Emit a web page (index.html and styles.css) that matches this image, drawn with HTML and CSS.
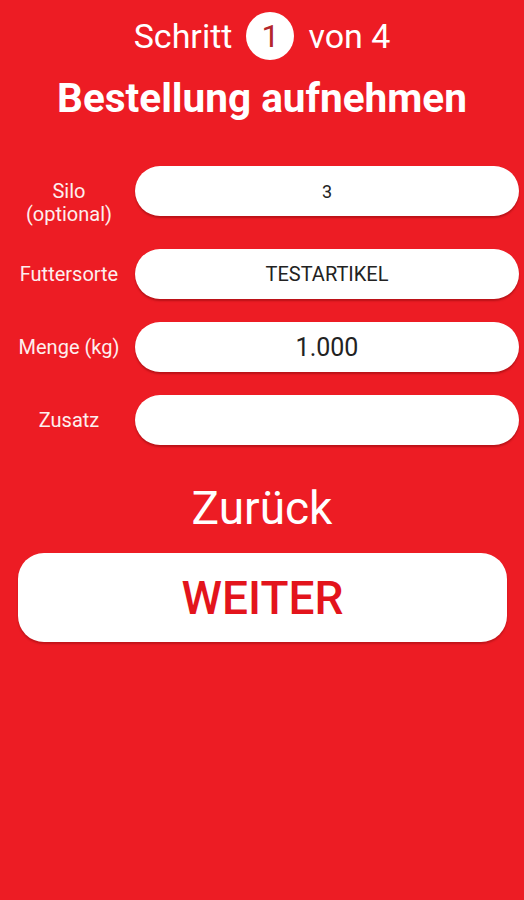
FILE: index.html
```html
<!DOCTYPE html>
<html lang="de">
<head>
    <meta charset="UTF-8">
    <meta name="viewport" content="width=device-width, initial-scale=1.0">
    <title>Bestellung aufnehmen</title>
    <link rel="stylesheet" href="styles.css">
</head>
<body>
    <div class="screen">
        <div class="step">
            <span>Schritt</span>
            <span class="step-num">1</span>
            <span>von 4</span>
        </div>
        <h1>Bestellung aufnehmen</h1>

        <div class="form">
            <div class="row">
                <label class="label label-two">Silo<br>(optional)</label>
                <div class="field field-sm">3</div>
            </div>
            <div class="row">
                <label class="label">Futtersorte</label>
                <div class="field field-md">TESTARTIKEL</div>
            </div>
            <div class="row">
                <label class="label">Menge (kg)</label>
                <div class="field field-lg">1.000</div>
            </div>
            <div class="row">
                <label class="label">Zusatz</label>
                <div class="field"></div>
            </div>
        </div>

        <div class="back">Zurück</div>
        <button class="next-btn">WEITER</button>
    </div>
</body>
</html>
```

FILE: styles.css
```css
body {
    margin: 0;
    background: #ed1c24;
    font-family: Roboto, "Liberation Sans", Arial, sans-serif;
    color: #fff;
}
.screen {
    min-height: 900px;
    display: flex;
    flex-direction: column;
}
.step {
    display: flex;
    justify-content: center;
    align-items: center;
    gap: 14px;
    padding-top: 12px;
    height: 48px;
    font-size: 34px;
}
.step-num {
    width: 48px;
    height: 48px;
    border-radius: 50%;
    background: #fff;
    color: #b3262c;
    font-size: 32px;
    display: flex;
    align-items: center;
    justify-content: center;
}
h1 {
    margin: 14px 0 0;
    font-size: 40.5px;
    line-height: 48px;
    font-weight: 700;
    text-align: center;
}
.form {
    margin-top: 34px;
    display: flex;
    flex-direction: column;
    gap: 23px;
    padding-right: 5px;
}
.row {
    display: flex;
    align-items: center;
}
.label {
    width: 138px;
    flex-shrink: 0;
    text-align: center;
    font-size: 20px;
    line-height: 23px;
    color: #fdeeee;
}
.label-two {
    margin-top: 24px;
}
.field {
    flex: 1;
    height: 50px;
    margin-left: -3px;
    border-radius: 25px;
    background: #fff;
    box-shadow: 0 2px 2px rgba(90, 0, 0, 0.35);
    color: #222;
    display: flex;
    align-items: center;
    justify-content: center;
}
.field-sm {
    font-size: 18px;
}
.field-md {
    font-size: 20px;
}
.field-lg {
    font-size: 25px;
}
.back {
    margin-top: 36px;
    font-size: 46px;
    line-height: 55px;
    text-align: center;
}
.next-btn {
    margin: 17px 17px 0 18px;
    height: 89px;
    border: none;
    border-radius: 26px;
    background: #fff;
    color: #e3141c;
    font-family: inherit;
    font-size: 46px;
    font-weight: 500;
    box-shadow: 0 2px 2px rgba(90, 0, 0, 0.3);
}
```
